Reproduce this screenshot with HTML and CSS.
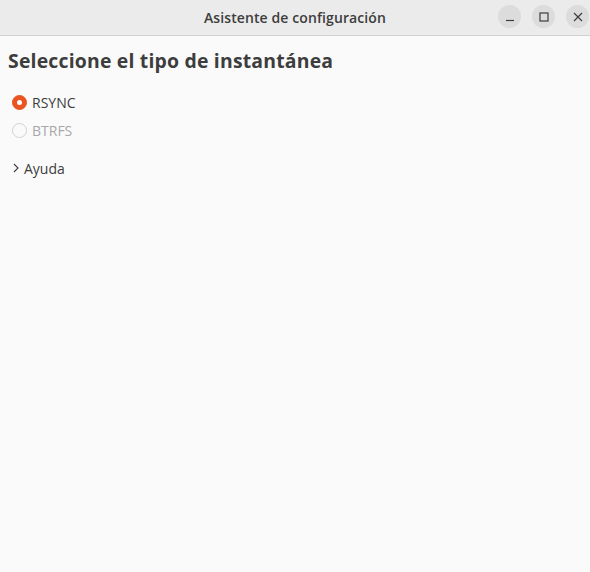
FILE: index.html
```html
<!DOCTYPE html>
<html lang="es">
<head>
<meta charset="utf-8">
<link rel="stylesheet" href="styles.css">
</head>
<body>
<div class="window">
  <header class="titlebar">
    <div class="title">Asistente de configuración</div>
    <div class="controls">
      <button class="ctl" aria-label="Minimizar"><svg width="10" height="10" viewBox="0 0 10 10"><path d="M1 8.5h8" stroke="#3d3d3d" stroke-width="1.2"/></svg></button>
      <button class="ctl" aria-label="Maximizar"><svg width="10" height="10" viewBox="0 0 10 10"><rect x="1" y="1" width="8" height="8" fill="none" stroke="#3d3d3d" stroke-width="1.2"/></svg></button>
      <button class="ctl" aria-label="Cerrar"><svg width="10" height="10" viewBox="0 0 10 10"><path d="M1 1l8 8M9 1l-8 8" stroke="#3d3d3d" stroke-width="1.2"/></svg></button>
    </div>
  </header>
  <main class="content">
    <h1 class="heading">Seleccione el tipo de instantánea</h1>
    <div class="options">
      <label class="option"><span class="radio checked"></span><span>RSYNC</span></label>
      <label class="option disabled"><span class="radio"></span><span>BTRFS</span></label>
    </div>
    <div class="expander"><svg class="chev" width="8" height="10" viewBox="0 0 8 10"><path d="M2 1l4 4-4 4" fill="none" stroke="#3d3d3d" stroke-width="1.1"/></svg><span>Ayuda</span></div>
  </main>
</div>
</body>
</html>
```
FILE: styles.css
```css
* { box-sizing: border-box; }
html, body { margin: 0; padding: 0; }
body {
  width: 590px;
  height: 572px;
  background: #fafafa;
  font-family: "Open Sans", "Noto Sans", sans-serif;
  color: #3d3d3d;
  overflow: hidden;
}
.window { display: flex; flex-direction: column; height: 572px; }
.titlebar {
  height: 36px;
  flex: none;
  background: #ebebeb;
  border-bottom: 1px solid #d2d2d2;
  display: flex;
  align-items: center;
  justify-content: center;
  position: relative;
}
.title {
  font-size: 14px;
  font-weight: 600;
  color: #3d3d3d;
  letter-spacing: 0.1px;
}
.controls {
  position: absolute;
  right: 1px;
  top: 5px;
  display: flex;
  gap: 11px;
}
.ctl {
  width: 23px;
  height: 23px;
  border-radius: 50%;
  border: none;
  background: #dcdcdc;
  padding: 0;
  display: flex;
  align-items: center;
  justify-content: center;
}
.content { padding: 11px 8px; }
.heading {
  margin: 0;
  font-size: 19.4px;
  font-weight: 700;
  color: #3d3d3d;
  line-height: 28px;
  letter-spacing: 0.2px;
}
.options {
  margin-top: 17px;
  display: flex;
  flex-direction: column;
  gap: 8px;
}
.option {
  display: flex;
  align-items: center;
  gap: 5px;
  font-size: 14px;
  height: 20px;
  padding-left: 4px;
}
.option.disabled { color: #a8a8a8; }
.radio {
  width: 15px;
  height: 15px;
  border-radius: 50%;
  border: 1px solid #d2d2d2;
  background: #fafafa;
  position: relative;
  flex: none;
}
.radio.checked {
  background: #e95420;
  border-color: #e95420;
}
.radio.checked::after {
  content: "";
  position: absolute;
  left: 50%;
  top: 50%;
  width: 5px;
  height: 5px;
  margin: -2.5px 0 0 -2.5px;
  border-radius: 50%;
  background: #fff;
}
.expander {
  margin-top: 18px;
  display: flex;
  align-items: center;
  gap: 4px;
  font-size: 14px;
  padding-left: 4px;
  height: 20px;
}
.chev { flex: none; }
```
